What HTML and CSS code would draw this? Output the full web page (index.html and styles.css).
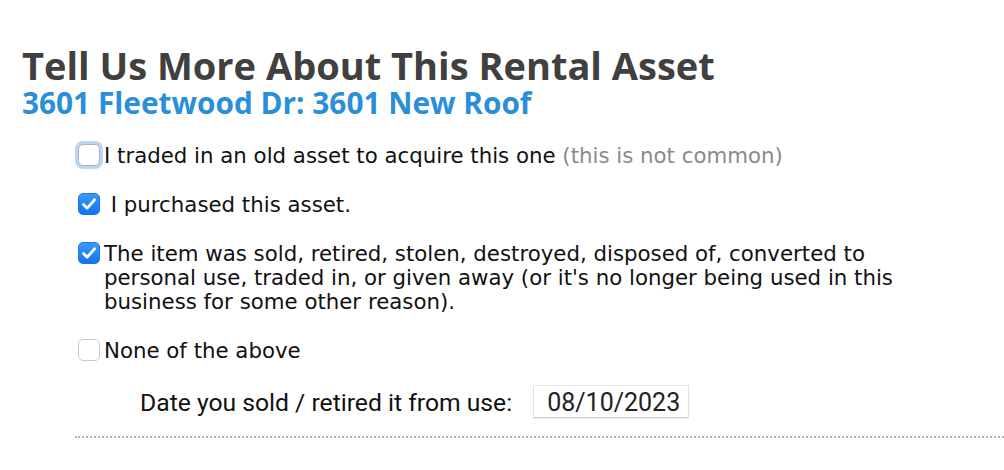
FILE: index.html
```html
<!DOCTYPE html>
<html lang="en">
  <head>
    <meta charset="utf-8" />
    <title>Tell Us More About This Rental Asset</title>
    <link rel="stylesheet" href="styles.css">
  </head>

  <body>
    <div class="page">
      <h1>Tell Us More About This Rental Asset</h1>
      <h2 class="asset-name">3601 Fleetwood Dr: 3601 New Roof</h2>

      <div class="options">
        <label class="option">
          <span class="box focused"></span>
          <span class="option-text">I traded in an old asset to acquire this one <span class="hint">(this is not common)</span></span>
        </label>

        <label class="option">
          <span class="box checked">
            <svg viewBox="0 0 22 22" width="22" height="22"><path d="M5.5 11.5 L9.2 15.2 L16.5 6.8" fill="none" stroke="#fff" stroke-width="2.8" stroke-linecap="round" stroke-linejoin="round"/></svg>
          </span>
          <span class="option-text">&nbsp;I purchased this asset.</span>
        </label>

        <label class="option">
          <span class="box checked">
            <svg viewBox="0 0 22 22" width="22" height="22"><path d="M5.5 11.5 L9.2 15.2 L16.5 6.8" fill="none" stroke="#fff" stroke-width="2.8" stroke-linecap="round" stroke-linejoin="round"/></svg>
          </span>
          <span class="option-text">The item was sold, retired, stolen, destroyed, disposed of, converted to personal use, traded in, or given away (or it's no longer being used in this business for some other reason).</span>
        </label>

        <label class="option">
          <span class="box"></span>
          <span class="option-text">None of the above</span>
        </label>

        <div class="date-row">
          <span class="date-label">Date you sold / retired it from use:</span>
          <span class="date-input">08/10/2023</span>
        </div>

        <div class="divider"></div>
      </div>
    </div>
  </body>
</html>
```

FILE: styles.css
```css
body {
  margin: 0;
  background-color: #fff;
  color: #111;
}

.page {
  padding: 44px 0 0 22px;
}

h1 {
  margin: 0;
  font-family: 'Open Sans', sans-serif;
  font-weight: 700;
  font-size: 38px;
  line-height: 42px;
  color: #404040;
}

.asset-name {
  margin: 0;
  font-family: 'Open Sans', sans-serif;
  font-weight: 700;
  font-size: 29.8px;
  line-height: 34px;
  color: #2a8fd8;
}

.options {
  margin: 24px 0 0 53px;
}

.option {
  display: flex;
  align-items: flex-start;
  width: 850px;
  margin-bottom: 25px;
  font-family: 'DejaVu Sans', sans-serif;
  font-size: 21.3px;
  line-height: 24px;
}

.box {
  flex: none;
  width: 20px;
  height: 20px;
  margin: 0 4px 0 3px;
  border: 1px solid #c9c9c9;
  border-radius: 5px;
  background: #fff;
  position: relative;
}

.box.focused {
  box-shadow: 0 0 0 3px #bcd6f6;
  border-color: #b0b0b0;
}

.box.checked {
  border-color: #1677ea;
  background: linear-gradient(#3d98fb, #0f74f0);
}

.box svg {
  position: absolute;
  left: -1px;
  top: -1px;
}

.hint {
  color: #8a8a8a;
}

.date-row {
  display: flex;
  align-items: baseline;
  margin: -3px 0 0 65px;
}

.date-label {
  font-family: 'Roboto', sans-serif;
  font-size: 24.7px;
  color: #111;
}

.date-input {
  margin-left: 21px;
  padding: 3px 8px 1px 13px;
  border: 1px solid #e2e2e2;
  border-bottom-color: #cfcfcf;
  box-shadow: 0 1px 1px rgba(0,0,0,0.08);
  font-family: 'Roboto', sans-serif;
  font-size: 25px;
  line-height: 27px;
  color: #222;
}

.divider {
  margin-top: 18px;
  border-top: 2px dotted #b4b4b4;
}
```
